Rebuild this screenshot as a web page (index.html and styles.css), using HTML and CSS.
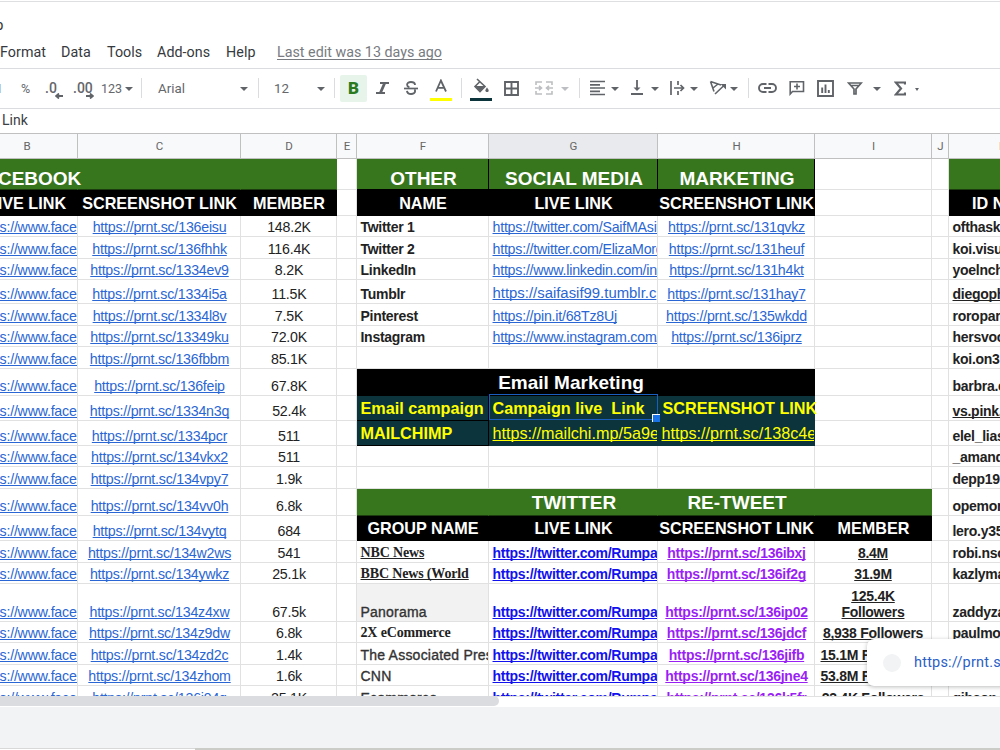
FILE: index.html
```html
<!DOCTYPE html>
<html lang="en">
<head>
<meta charset="utf-8">
<title>Spreadsheet</title>
<link rel="stylesheet" href="styles.css">
</head>
<body>
<div class="app">
<header class="top">
  <div class="doc">p</div>
  <nav class="menus"><span>Format</span><span>Data</span><span>Tools</span><span>Add-ons</span><span>Help</span><span class="edit">Last edit was 13 days ago</span></nav>
</header>
<div class="toolbar">
  <i class="sliver"></i>
  <span class="sm">%</span>
  <span class="dec">.0<svg width="8" height="6" viewBox="0 0 8 6"><path d="M8 3H2M4 .5 1 3l3 2.500" /></svg></span>
  <span class="dec two">.00<svg width="8" height="6" viewBox="0 0 8 6"><path d="M0 3h6M4 .5 7 3 4 5.500" /></svg></span>
  <span class="num">123<i class="caret"></i></span>
  <i class="sep"></i>
  <span>Arial</span><i class="caret"></i>
  <i class="sep"></i>
  <span>12</span><i class="caret"></i>
  <i class="sep"></i>
  <b class="bold">B</b>
  <svg width="14" height="14" viewBox="0 0 14 14"><path class="f" d="M4 1h9v2h-3.200L6.300 11H9v2H0v-2h3.300L6.800 3H4z"/></svg>
  <svg width="16" height="16" viewBox="0 0 16 16"><path d="M12 5C12 2.700 10.200 2 8 2 5.600 2 4.100 3 4.100 4.800c0 1.300.9 2 2.300 2.500M4 10.800c.2 2 1.800 3.200 4.100 3.200 2.300 0 4-1 4-2.900 0-.8-.3-1.300-.7-1.700" stroke-width="1.900"/><path d="M1 8.500h14" stroke-width="1.700"/></svg>
  <span class="color yel"><svg width="14" height="14" viewBox="0 0 14 14"><path d="M2 12.500 6.900 1.500 12 12.500M3.800 8.900h6.400" stroke-width="1.800"/></svg></span>
  <i class="sep"></i>
  <span class="color navy"><svg width="18" height="16" viewBox="0 0 18 16"><path d="M5 1l8 7.500-5 5-5-5 5-5" stroke-width="1.600"/><path class="f" d="M3 8h10l-5 5.500zM15 9.500s1.700 2 1.700 3-.7 1.500-1.700 1.500-1.700-.6-1.700-1.500 1.700-3 1.700-3z"/></svg></span>
  <svg width="15" height="15" viewBox="0 0 15 15"><path d="M1 1h13v13H1zM7.500 1v13M1 7.500h13" stroke-width="1.900"/></svg>
  <svg class="pale" width="18" height="16" viewBox="0 0 18 16"><path d="M1 5V2h6M11 2h6v3M1 11v3h6M11 14h6v-3M0 8h6M12 8h6M4 5.800 6.500 8 4 10.200M14 5.800 11.500 8 14 10.200" stroke-width="1.600"/></svg>
  <i class="caret pale"></i>
  <i class="sep"></i>
  <svg width="15" height="16" viewBox="0 0 15 16"><path d="M0 1.500h15M0 4.800h10M0 8h15M0 11.300h10M0 14.500h15" stroke-width="1.700"/></svg><i class="caret"></i>
  <svg width="14" height="16" viewBox="0 0 14 16"><path d="M1 14h12M7 0v9" stroke-width="1.800"/><path class="f" d="M3.500 7.500h7L7 11z"/></svg><i class="caret"></i>
  <svg width="16" height="16" viewBox="0 0 16 16"><path d="M2 1v14M9 1v4M9 11v4M5 8h9M11.500 5 14.500 8l-3 3" stroke-width="1.700"/></svg><i class="caret"></i>
  <svg width="18" height="16" viewBox="0 0 18 16"><path d="M1.500 1.500 12 5M1.500 1.500 5 11.500M4 8 9 4M6 14 15 5.500" stroke-width="1.600"/><path class="f" d="M11.500 4H17v5.500z"/></svg><i class="caret"></i>
  <i class="sep"></i>
  <svg width="19" height="12" viewBox="0 0 19 12"><path d="M8.500 2H5a4 4 0 0 0 0 8h3.500M10.500 2H14a4 4 0 0 1 0 8h-3.500M6 6h7" stroke-width="1.900"/></svg>
  <svg width="16" height="16" viewBox="0 0 16 16"><path d="M1.200 14V1.700h13.300v9.800H3.500zM8 3.500v6M5 6.500h6" stroke-width="1.600"/></svg>
  <svg width="17" height="17" viewBox="0 0 17 17"><path d="M1 1h15v15H1zM5.200 13V7.500M8.500 13V4.500M11.800 13v-3" stroke-width="1.900"/></svg>
  <svg width="16" height="14" viewBox="0 0 16 14"><path d="M1.500 2h12.800L9 8v5H7V8zM4 4.500h8" stroke-width="1.700"/></svg><i class="caret"></i>
  <svg width="12" height="15" viewBox="0 0 12 15"><path d="M11 3.500V1.500H1.800L7 7.500l-5.200 6H11v-2" stroke-width="2.200"/></svg><i class="caret tiny"></i>
</div>
<div class="formula">Link</div>
<div class="cols heads"><span>B</span><span>C</span><span>D</span><span>E</span><span>F</span><span class="on">G</span><span>H</span><span>I</span><span>J</span><span class="k">K</span></div>
<main class="cols grid">
<b class="t g o">FACEBOOK</b><b class="t g"></b><b class="t g"></b><p></p><b class="t g x">OTHER</b><b class="t g x">SOCIAL MEDIA</b><b class="t g x">MARKETING</b><p></p><p></p><b class="t g"></b>
<b class="h">LIVE LINK</b><b class="h">SCREENSHOT LINK</b><b class="h">MEMBER</b><p></p><b class="h">NAME</b><b class="h">LIVE LINK</b><b class="h">SCREENSHOT LINK</b><p></p><p></p><b class="h id">ID NA</b>
<p class="l u">https://www.faceb</p><p class="u">https://prnt.sc/136eisu</p><p>148.2K</p><p></p><p class="n">Twitter 1</p><p class="l u">https://twitter.com/SaifMAsif</p><p class="u">https://prnt.sc/131qvkz</p><p></p><p></p><p class="n">ofthask</p>
<p class="l u">https://www.faceb</p><p class="u">https://prnt.sc/136fhhk</p><p>116.4K</p><p></p><p class="n">Twitter 2</p><p class="l u">https://twitter.com/ElizaMorg</p><p class="u">https://prnt.sc/131heuf</p><p></p><p></p><p class="n">koi.visu</p>
<p class="l u">https://www.faceb</p><p class="u">https://prnt.sc/1334ev9</p><p>8.2K</p><p></p><p class="n">LinkedIn</p><p class="l u">https://www.linkedin.com/in/</p><p class="u">https://prnt.sc/131h4kt</p><p></p><p></p><p class="n">yoelnch</p>
<p class="l u">https://www.faceb</p><p class="u">https://prnt.sc/1334i5a</p><p>11.5K</p><p></p><p class="n">Tumblr</p><p class="l u big">https://saifasif99.tumblr.c</p><p class="u">https://prnt.sc/131hay7</p><p></p><p></p><p class="n ul">diegoph</p>
<p class="l u">https://www.faceb</p><p class="u">https://prnt.sc/1334l8v</p><p>7.5K</p><p></p><p class="n">Pinterest</p><p class="l u">https://pin.it/68Tz8Uj</p><p class="u">https://prnt.sc/135wkdd</p><p></p><p></p><p class="n">roropar</p>
<p class="l u">https://www.faceb</p><p class="u">https://prnt.sc/13349ku</p><p>72.0K</p><p></p><p class="n">Instagram</p><p class="l u">https://www.instagram.com/</p><p class="u">https://prnt.sc/136iprz</p><p></p><p></p><p class="n">hersvoc</p>
<p class="l u">https://www.faceb</p><p class="u">https://prnt.sc/136fbbm</p><p>85.1K</p><p></p><p></p><p></p><p></p><p></p><p></p><p class="n">koi.on3</p>
<p class="l u">https://www.faceb</p><p class="u">https://prnt.sc/136feip</p><p>67.8K</p><p></p><b class="t k1"></b><b class="t k1 em">Email Marketing</b><b class="t k1"></b><p></p><p></p><p class="n">barbra.c</p>
<p class="l u">https://www.faceb</p><p class="u">https://prnt.sc/1334n3q</p><p>52.4k</p><p></p><b class="y e">Email campaign</b><b class="y sel">Campaign live&nbsp; Link<i class="box"></i></b><b class="y o">SCREENSHOT LINK</b><p></p><p></p><p class="n ul">vs.pink.</p>
<p class="l u">https://www.faceb</p><p class="u">https://prnt.sc/1334pcr</p><p>511</p><p></p><b class="y e">MAILCHIMP</b><b class="y r">https://mailchi.mp/5a9e</b><b class="y r">https://prnt.sc/138c4e</b><p></p><p></p><p class="n">elel_lias</p>
<p class="l u">https://www.faceb</p><p class="u">https://prnt.sc/134vkx2</p><p>511</p><p></p><p></p><p></p><p></p><p></p><p></p><p class="n">_amand</p>
<p class="l u">https://www.faceb</p><p class="u">https://prnt.sc/134vpy7</p><p>1.9k</p><p></p><p></p><p></p><p></p><p></p><p></p><p class="n">depp19</p>
<p class="l u">https://www.faceb</p><p class="u">https://prnt.sc/134vv0h</p><p>6.8k</p><p></p><b class="t g d"></b><b class="t g d">TWITTER</b><b class="t g d">RE-TWEET</b><b class="t g d"></b><p></p><p class="n">opemon</p>
<p class="l u">https://www.faceb</p><p class="u">https://prnt.sc/134vytq</p><p>684</p><p></p><b class="h">GROUP NAME</b><b class="h">LIVE LINK</b><b class="h">SCREENSHOT LINK</b><b class="h">MEMBER</b><p></p><p class="n">lero.y35</p>
<p class="l u">https://www.faceb</p><p class="u">https://prnt.sc/134w2ws</p><p>541</p><p></p><p class="n s ul">NBC News</p><p class="n bl">https://twitter.com/Rumpa</p><p class="pu">https://prnt.sc/136ibxj</p><p class="m">8.4M</p><p></p><p class="n">robi.nso</p>
<p class="l u">https://www.faceb</p><p class="u">https://prnt.sc/134ywkz</p><p>25.1k</p><p></p><p class="n s ul">BBC News (World</p><p class="n bl">https://twitter.com/Rumpa</p><p class="pu">https://prnt.sc/136if2g</p><p class="m">31.9M</p><p></p><p class="n">kazlyma</p>
<p class="l u">https://www.faceb</p><p class="u">https://prnt.sc/134z4xw</p><p>67.5k</p><p></p><p class="l w gray">Panorama</p><p class="n bl">https://twitter.com/Rumpa</p><p class="pu">https://prnt.sc/136ip02</p><p class="m wrap">125.4K<br>Followers</p><p></p><p class="n">zaddyza</p>
<p class="l u">https://www.faceb</p><p class="u">https://prnt.sc/134z9dw</p><p>6.8k</p><p></p><p class="n s">2X eCommerce</p><p class="n bl">https://twitter.com/Rumpa</p><p class="pu">https://prnt.sc/136jdcf</p><p class="m">8,938 Followers</p><p></p><p class="n">paulmo</p>
<p class="l u">https://www.faceb</p><p class="u">https://prnt.sc/134zd2c</p><p>1.4k</p><p></p><p class="l w">The Associated Press</p><p class="n bl">https://twitter.com/Rumpa</p><p class="pu">https://prnt.sc/136jifb</p><p class="m under">15.1M F</p><p></p><p></p>
<p class="l u">https://www.faceb</p><p class="u">https://prnt.sc/134zhom</p><p>1.6k</p><p></p><p class="l w">CNN</p><p class="n bl">https://twitter.com/Rumpa</p><p class="pu">https://prnt.sc/136jne4</p><p class="m under">53.8M F</p><p></p><p></p>
<p class="l u">https://www.faceb</p><p class="u">https://prnt.sc/136j94q</p><p>25.1K</p><p></p><p class="l w">Ecommerce</p><p class="n bl">https://twitter.com/Rumpa</p><p class="pu">https://prnt.sc/136k5fr</p><p class="m">23.4K Followers</p><p></p><p class="n">gibson</p>
</main>
<div class="scroll"><div class="thumb"></div></div>
<footer class="foot"></footer>
<div class="edge"><i></i></div>
<aside class="tip"><i></i><span>https://prnt.sc</span></aside>
</div>
</body>
</html>
```
FILE: styles.css
```css
* { box-sizing: border-box; }
body { margin: 0; background: #fff; }
.app {
  position: relative;
  width: 1000px;
  height: 750px;
  overflow: hidden;
  display: flex;
  flex-direction: column;
  font-family: "Liberation Sans", Arial, sans-serif;
}
.app > * { flex-shrink: 0; }
p, b { margin: 0; }

.top {
  margin-top: 1px;
  height: 68px;
  border-top: 1px solid #dedfe1;
  border-bottom: 1px solid #dadce0;
  font-family: Roboto, sans-serif;
  color: #36393d;
}
.doc { height: 38px; padding-top: 13px; margin-left: -5px; font-size: 15px; line-height: 20px; }
.menus {
  display: grid;
  grid-template-columns: 61px 46px 50px 69px 51px auto;
  font-size: 14.3px;
  line-height: 24px;
  letter-spacing: .05px;
  white-space: nowrap;
}
.menus .edit { color: #777b80; letter-spacing: 0; text-decoration: underline; text-decoration-skip-ink: none; text-underline-offset: 2px; }

.toolbar {
  height: 40px;
  border-bottom: 1px solid #dadce0;
  display: grid;
  grid-template-columns: 21px 24px 28px 28px 40px 17px 82px 18px 16px 43px 17px 6px 36px 27px 27px 31px 9px 34px 31px 26px 18px 11px 21px 19px 21px 18px 21px 19px 21px 18px 10px 31px 28px 30px 26px 21px 21px auto;
  align-items: center;
  justify-items: start;
  padding-bottom: 1px;
  font-family: Roboto, sans-serif;
  font-size: 13.3px;
  color: #64676b;
}
.toolbar svg { fill: none; stroke: #606468; display: block; }
.toolbar svg .f { fill: #606468; stroke: none; }
.toolbar svg.pale { stroke: #bcbec1; }
.sliver { width: 1px; height: 9px; background: #a9d5ee; }
.sm { font-size: 12.500px; }
.dec { position: relative; font-weight: 500; font-size: 14px; }
.dec svg { position: absolute; right: -6px; bottom: -3px; stroke-width: 1.800px; }
.dec.two svg { right: -1px; }
.num { display: flex; align-items: center; gap: 3px; font-size: 12.500px; }
.caret { width: 0; height: 0; border: 4px solid transparent; border-top-color: #606468; border-bottom: 0; margin-top: 1px; }
.caret.pale { border-top-color: #bcbec1; }
.caret.tiny { border-width: 3px 2.500px 0; margin-top: 3px; }
.sep { width: 1px; height: 20px; background: #dadce0; }
.bold {
  width: 27px;
  height: 27px;
  border-radius: 2px;
  background: #e6f4ea;
  color: #2a7a1f;
  font: 900 17px/27px Roboto, sans-serif;
  text-align: center;
}
.color { width: 22px; height: 26px; padding-top: 3px; border-bottom: 3px solid #ff0; display: flex; justify-content: center; align-items: flex-start; }
.yel { padding-top: 4px; }
.navy { border-color: #0c343d; }

.formula { height: 24px; padding-left: 2px; font: 14px/23px Roboto, sans-serif; color: #3c4043; }

.cols {
  display: grid;
  width: 1054px;
  margin-left: -24px;
  grid-template-columns: 102px 163px 96px 20px 132px 169px 157px 117px 17px 81px;
}
.heads { height: 26px; border-top: 1px solid #c0c0c0; border-bottom: 1px solid #c0c0c0; background: #f8f9fa; }
.heads span { border-right: 1px solid #c0c0c0; padding-left: 1px; font: 11.500px/24px Roboto, sans-serif; color: #666; text-align: center; }
.heads .on { background: #e8eaed; }
.heads .k { text-align: left; padding-left: 50px; }

.grid {
  height: 537px;
  overflow: hidden;
  grid-template-rows: 31px 26px 21px 22px 21px 24px 22px 21px 22px 27px 25px 25px 21px 22px 27px 25px 22px 21px 38px 21px 22px 21px 22px;
  font-size: 14.2px;
  letter-spacing: -.22px;
  line-height: 18px;
  color: #222;
  text-decoration-skip-ink: none;
}
.grid > * {
  display: flex;
  align-items: flex-end;
  justify-content: center;
  overflow: hidden;
  white-space: nowrap;
  padding-left: 1px;
  border-right: 1px solid #e1e1e1;
  border-bottom: 1px solid #e1e1e1;
}
.grid .u { color: #2a66d4; text-decoration: underline; }
.grid .l, .grid .n { justify-content: flex-start; padding-left: 3.500px; }
.grid > :nth-child(10n+1).l { padding-left: .8px; }
.grid .n { font-weight: bold; font-size: 14px; letter-spacing: -.28px; }
.grid .ul { text-decoration: underline; }
.grid .big { font-size: 14.900px; letter-spacing: 0; padding-bottom: 1px; }
.grid .bl { color: #1111f0; text-decoration: underline; }
.grid .pu { color: #9a1ff5; font-weight: bold; font-size: 14px; letter-spacing: -.27px; text-decoration: underline; }
.grid .m { font-weight: bold; font-size: 14px; letter-spacing: -.27px; text-decoration: underline; padding-left: 0; }
.grid .wrap { line-height: 16px; text-align: center; padding-bottom: 1px; }
.grid .under { justify-content: flex-start; padding-left: 5.500px; }
.grid .s { font-family: "Liberation Serif", serif; font-size: 14px; letter-spacing: -.15px; }
.grid .w { color: #333; font-size: 14px; letter-spacing: .22px; -webkit-text-stroke: .35px #333; }
.grid .gray { background: #f2f2f2; }

.grid .t { font-size: 19px; line-height: 21px; letter-spacing: 0; color: #fff; padding-left: 2px; }
.grid .g { background: #38761d; border-right-color: #38761d; border-bottom-color: #1c3b0e; }
.grid .g.x { border-right-color: #000; border-bottom-color: #000; }
.grid .g.d { padding-bottom: 2px; }
.grid .k1 { background: #000; border-color: #000; padding-bottom: 2px; }
.grid .em { padding: 0 4px 2px 0; }
.grid .h { background: #000; border-color: #000; color: #fff; font-size: 16.200px; letter-spacing: 0; padding-bottom: 3px; }
.grid .id { justify-content: flex-start; padding-left: 23px; }
.grid .y { background: #0c343d; border-color: #0c343d; color: #ff0; font-size: 16.200px; letter-spacing: 0; justify-content: flex-start; padding: 0 0 3px 3.500px; }
.grid .e { border-color: #000; }
.grid .r { font-weight: normal; text-decoration: underline; }
.grid .o { overflow: visible; position: relative; z-index: 1; }
.grid .y.o { padding-left: 4.500px; }
.grid .sel { overflow: visible; position: relative; z-index: 2; }
.box { position: absolute; left: 0; top: -2px; width: 169px; height: 26px; border: 1px solid #1a5fc0; }
.box::after { content: ""; position: absolute; right: -3px; bottom: -3px; width: 7px; height: 7px; background: #1a73e8; border: 1px solid #fff; border-width: 1px 0 0 1px; }

.scroll { height: 11px; border-top: 1px solid #e1e1e1; background: #fff; }
.thumb { width: 499px; height: 10px; margin-top: -1px; background: #dadce0; border-radius: 0 5px 5px 0; }
.foot { height: 41px; background: #f1f3f4; }
.edge { height: 2px; background: #cbccc8; }
.edge i { display: block; width: 195px; height: 2px; border-top: 1px solid #d8d8d8; background: #fff; }

.tip {
  position: absolute;
  left: 867px;
  top: 639px;
  width: 160px;
  height: 47px;
  padding-left: 16px;
  display: flex;
  align-items: center;
  gap: 13px;
  border-radius: 7px;
  background: #fff;
  box-shadow: 0 1px 4px rgba(60, 64, 67, .35);
  font: 14.500px Roboto, sans-serif;
  letter-spacing: .2px;
  color: #2a5fc8;
}
.tip i { width: 18px; height: 18px; border-radius: 50%; background: #f1f3f4; }
```
